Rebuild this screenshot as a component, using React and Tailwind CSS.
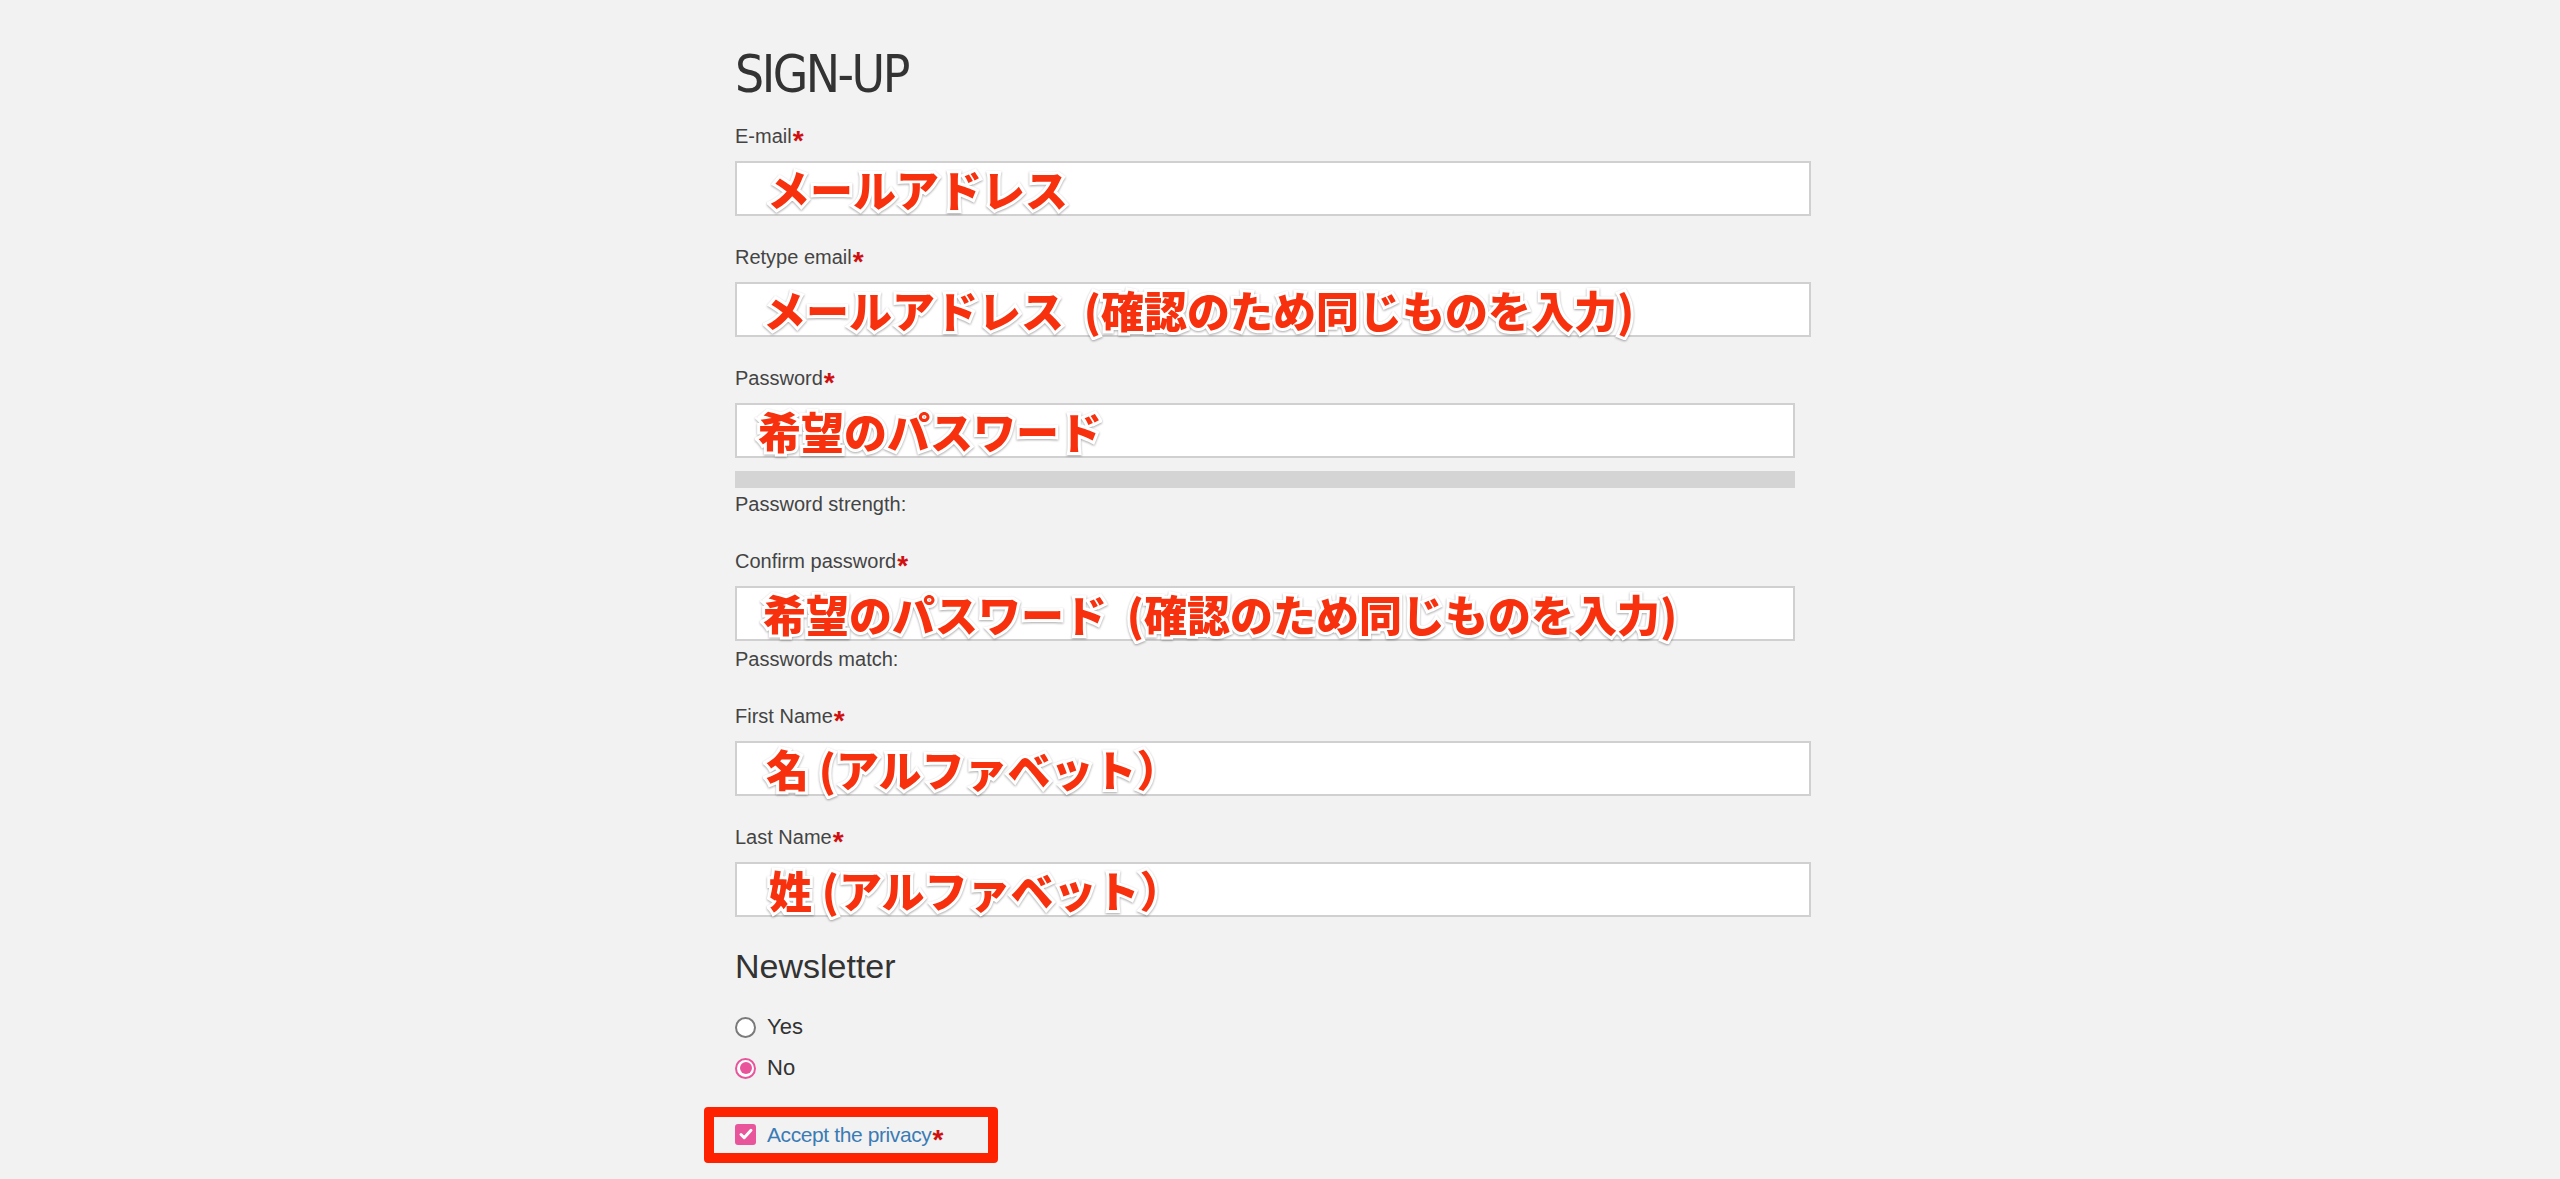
import React from "react";

const labelFont = { fontFamily: '"Liberation Sans", Arial, sans-serif' };
const jpFont = { fontFamily: '"Noto Sans CJK JP", "Noto Sans", sans-serif' };

function Star() {
  return <span className="text-[#d01010] text-[28px] font-bold leading-[0] relative top-[7px] ml-[1px]">*</span>;
}

function Label({ text, className }) {
  return (
    <div className={"text-[20px] leading-none text-[#444] h-[20px] whitespace-nowrap " + className} style={labelFont}>
      {text}
      <Star />
    </div>
  );
}

function Field({ value, wide = true, indent = "pl-[28px]" }) {
  return (
    <div
      className={
        "mt-[15px] h-[55px] bg-white border-2 border-[#d0d0d0] flex items-center overflow-visible " +
        (wide ? "w-[1076px] " : "w-[1060px] ") +
        indent
      }
    >
      <span
        className="text-[43px] font-black leading-none text-[#f7300e] whitespace-nowrap [-webkit-text-stroke:6px_white] [paint-order:stroke_fill] drop-shadow-[0_1px_1px_rgba(0,0,0,0.35)]"
        style={jpFont}
      >
        {value}
      </span>
    </div>
  );
}

export default function App() {
  return (
    <div className="min-h-screen bg-[#f2f2f2]">
      <div className="w-[1090px] mx-auto flex flex-col pt-[49px] pb-[40px]">
        <h1
          className="text-[51px] leading-none text-[#333] font-normal h-[52px] whitespace-nowrap tracking-[-2.5px]"
          style={{ fontFamily: '"DejaVu Sans Condensed", "Liberation Sans", sans-serif' }}
        >
          SIGN-UP
        </h1>

        <Label text="E-mail" className="mt-[25px]" />
        <Field value="メールアドレス" indent="pl-[30px]" />

        <Label text="Retype email" className="mt-[31px]" />
        <Field value={"メールアドレス\u00a0\u00a0(確認のため同じものを入力)"} indent="pl-[26px]" />

        <Label text="Password" className="mt-[31px]" />
        <Field value="希望のパスワード" wide={false} indent="pl-[21px]" />
        <div className="mt-[13px] w-[1060px] h-[17px] bg-[#d4d4d4]" />
        <div className="mt-[6px] text-[20px] leading-none text-[#444] h-[20px]" style={labelFont}>
          Password strength:
        </div>

        <Label text="Confirm password" className="mt-[37px]" />
        <Field value={"希望のパスワード\u00a0\u00a0(確認のため同じものを入力)"} wide={false} indent="pl-[26px]" />
        <div className="mt-[8px] text-[20px] leading-none text-[#444] h-[20px]" style={labelFont}>
          Passwords match:
        </div>

        <Label text="First Name" className="mt-[37px]" />
        <Field value="名 (アルファベット）" indent="pl-[29px]" />

        <Label text="Last Name" className="mt-[31px]" />
        <Field value="姓 (アルファベット）" indent="pl-[32px]" />

        <div className="mt-[32px] text-[34px] leading-none text-[#333] h-[35px]" style={labelFont}>
          Newsletter
        </div>

        <label className="mt-[30px] h-[26px] flex items-center gap-[11px]" style={labelFont}>
          <span className="w-[21px] h-[21px] rounded-full border-2 border-[#7a7a7a] bg-white" />
          <span className="text-[22px] leading-none text-[#333]">Yes</span>
        </label>
        <label className="mt-[15px] h-[26px] flex items-center gap-[11px]" style={labelFont}>
          <span className="w-[21px] h-[21px] rounded-full border-2 border-[#e8559b] bg-white flex items-center justify-center">
            <span className="w-[12px] h-[12px] rounded-full bg-[#e8559b]" />
          </span>
          <span className="text-[22px] leading-none text-[#333]">No</span>
        </label>

        <div className="relative mt-[40px] h-[26px] flex items-center gap-[11px]" style={labelFont}>
          <span className="w-[21px] h-[21px] rounded-[3px] bg-[#e8559b] flex items-center justify-center">
            <svg viewBox="0 0 16 16" className="w-[16px] h-[16px]" fill="none" stroke="white" strokeWidth="3" strokeLinecap="round" strokeLinejoin="round">
              <path d="M3 8.5l3.2 3.2L13 4.3" />
            </svg>
          </span>
          <span className="text-[21px] leading-none text-[#3b7bb5] whitespace-nowrap tracking-[-0.4px]">
            Accept the privacy
            <Star />
          </span>
          <div className="absolute left-[-31px] top-[-14px] w-[294px] h-[56px] border-[10px] border-[#ff2200] rounded-[4px] pointer-events-none" />
        </div>
      </div>
    </div>
  );
}
